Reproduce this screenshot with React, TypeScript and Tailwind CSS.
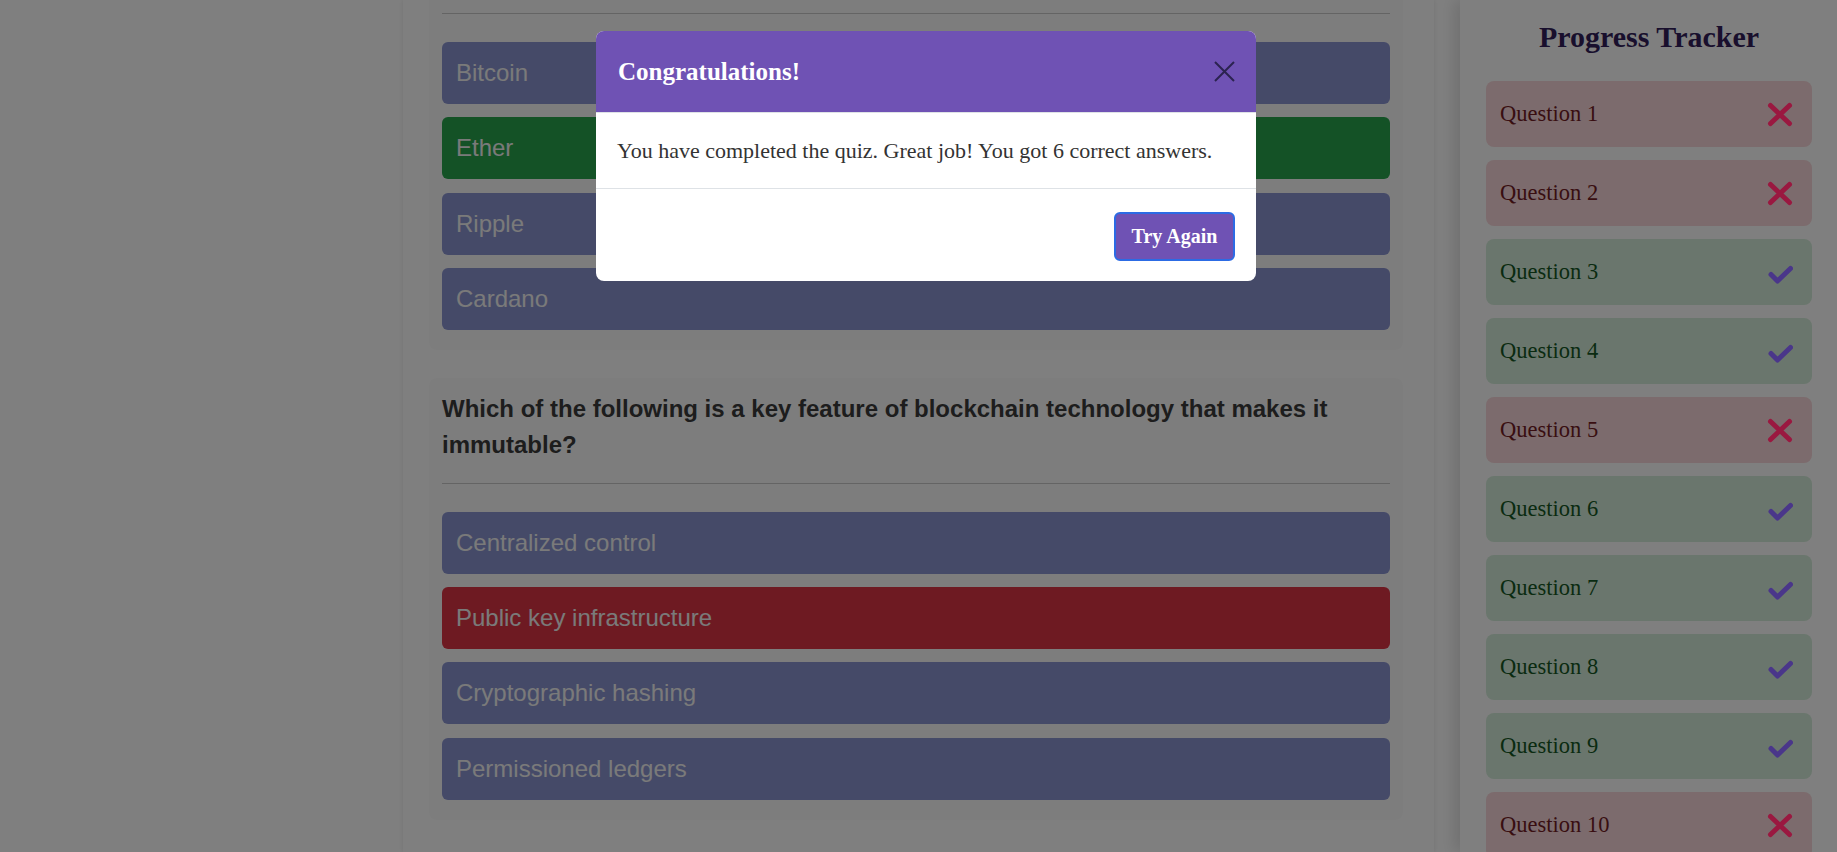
import { Fragment } from "react"

const quiz = [
    {
        question: "Which cryptocurrency is used to pay for transactions on Ethereum?",
        options: ["Bitcoin", "Ether", "Ripple", "Cardano"],
        picked: "Ether",
        answer: "Ether",
    },
    {
        question:
            "Which of the following is a key feature of blockchain technology that makes it immutable?",
        options: [
            "Centralized control",
            "Public key infrastructure",
            "Cryptographic hashing",
            "Permissioned ledgers",
        ],
        picked: "Public key infrastructure",
        answer: "Cryptographic hashing",
    },
]

const results = [false, false, true, true, false, true, true, true, true, false]

const CrossIcon = () => (
    <svg width="26" height="25" viewBox="0 0 26 25" className="relative z-[45]">
        <path
            d="M3.5 3.5 L22.5 21.5 M22.5 3.5 L3.5 21.5"
            stroke="#9a1840"
            strokeWidth="5"
            strokeLinecap="round"
            fill="none"
        />
    </svg>
)

const CheckIcon = () => (
    <svg width="25" height="19" viewBox="0 0 25 19" className="relative z-[45] mt-[5px]">
        <path
            d="M3 9.5 L9.5 16 L22.5 3.5"
            stroke="#4a368a"
            strokeWidth="5"
            strokeLinecap="round"
            strokeLinejoin="round"
            fill="none"
        />
    </svg>
)

const optionColor = (option: string, picked: string, answer: string) => {
    if (option !== picked) return "bg-[#8a94d0]"
    return option === answer ? "bg-[#28a44c]" : "bg-[#dc3545]"
}

const QuestionCard = ({ item }: { item: (typeof quiz)[number] }) => (
    <div className="rounded-lg bg-[#fbfbfb] px-[13px] pt-[13px] pb-[20px]">
        <h3 className="text-[24px] font-bold leading-[36px] text-[#3a3a3a]">{item.question}</h3>
        <hr className="mt-[20px] border-t border-[#c9c9c9]" />
        <div className="mt-[28px] flex flex-col gap-[13.3px]">
            {item.options.map((option) => (
                <div
                    key={option}
                    className={`flex h-[62px] items-center rounded-md px-[14px] text-[24px] text-[#f4f4f4] ${optionColor(
                        option,
                        item.picked,
                        item.answer
                    )}`}
                >
                    {option}
                </div>
            ))}
        </div>
    </div>
)

const App = () => {
    const correct = results.filter(Boolean).length

    return (
        <div className="relative h-screen w-full overflow-hidden bg-white font-['Liberation_Sans',Arial,sans-serif]">
            {/* quiz column, scrolled down a little */}
            <main className="mx-auto flex h-full w-[1031px] flex-col bg-white pl-[26px] pr-[31px] shadow-[0_0_5px_rgba(0,0,0,0.1)]">
                <div className="-mt-[56px] flex flex-col gap-[28px]">
                    {quiz.map((item) => (
                        <QuestionCard key={item.question} item={item} />
                    ))}
                </div>
            </main>

            {/* progress tracker */}
            <aside className="absolute right-0 top-0 h-full w-[377px] bg-white pl-[26px] pr-[25px] font-['Liberation_Serif','Times_New_Roman',serif] shadow-[-6px_0_14px_rgba(0,0,0,0.12)]">
                <h2 className="pt-[19px] text-center text-[30px] font-bold leading-[36px] text-[#321e5a]">
                    Progress Tracker
                </h2>
                <ul className="mt-[26px] flex flex-col gap-[13px]">
                    {results.map((ok, i) => (
                        <Fragment key={i}>
                            <li
                                className={`flex h-[66px] items-center justify-between rounded-lg pl-[14px] pr-[19px] text-[22.5px] ${
                                    ok ? "bg-[#d4edda] text-[#155724]" : "bg-[#f8d7da] text-[#721c24]"
                                }`}
                            >
                                <span>Question {i + 1}</span>
                                {ok ? <CheckIcon /> : <CrossIcon />}
                            </li>
                        </Fragment>
                    ))}
                </ul>
            </aside>

            {/* result modal */}
            <div className="fixed inset-0 z-40 bg-black/50" />
            <div className="fixed left-[596px] top-[31px] z-50 w-[660px] overflow-hidden rounded-lg bg-white font-['Liberation_Serif','Times_New_Roman',serif]">
                <div className="flex h-[82px] items-center justify-between border-b border-[#dee2e6] bg-[#6f52b4] pl-[22px] pr-[21px]">
                    <h5 className="text-[25px] font-bold text-white">Congratulations!</h5>
                    <button className="flex h-[21px] w-[21px] items-center justify-center">
                        <svg width="21" height="21" viewBox="0 0 21 21">
                            <path d="M1 1 L20 20 M20 1 L1 20" stroke="#2b2350" strokeWidth="2" fill="none" />
                        </svg>
                    </button>
                </div>
                <div className="flex h-[75px] items-center px-[21px] text-[22px] text-[#333]">
                    You have completed the quiz. Great job! You got {correct} correct answers.
                </div>
                <div className="flex h-[93px] items-center justify-end border-t border-[#dee2e6] px-[21px]">
                    <button className="mt-[2px] h-[49px] w-[121px] rounded-md border-2 border-[#2c6be4] bg-[#6f52b4] text-[20px] font-bold text-white">
                        Try Again
                    </button>
                </div>
            </div>
        </div>
    )
}

export default App
